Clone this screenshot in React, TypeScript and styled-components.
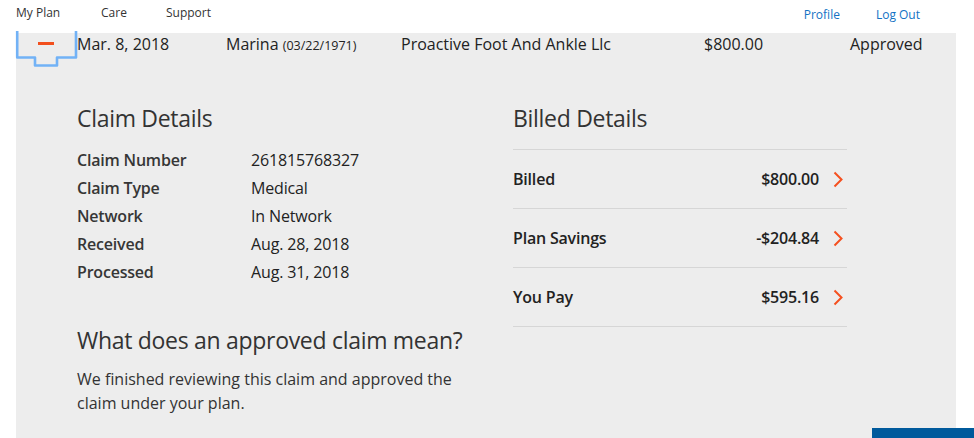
import React from "react";
import styled, { createGlobalStyle } from "styled-components";

const Global = createGlobalStyle`
  html, body { margin: 0; padding: 0; background: #ffffff; }
  body { font-family: "Open Sans", "Liberation Sans", sans-serif; color: #222; overflow: hidden; }
  * { box-sizing: border-box; }
`;

const Page = styled.div`
  width: 974px;
  height: 438px;
  position: relative;
  overflow: hidden;
  background: #fff;
`;

const Header = styled.header`
  height: 33px;
  display: flex;
  align-items: flex-start;
  justify-content: space-between;
  padding: 4px 54px 0 16px;
`;

const NavGroup = styled.nav<{ $gap: number; $top?: number }>`
  display: flex;
  gap: ${(p) => p.$gap}px;
  margin-top: ${(p) => p.$top ?? 0}px;
`;

const NavLink = styled.a<{ $blue?: boolean; $w?: number }>`
  font-size: 12px;
  line-height: 18px;
  color: ${(p) => (p.$blue ? "#1372c4" : "#333")};
  text-decoration: none;
  width: ${(p) => (p.$w ? `${p.$w}px` : "auto")};
`;

const Panel = styled.section`
  margin-left: 16px;
  width: 940px;
  height: 405px;
  background: #ededed;
`;

const ClaimRow = styled.div`
  display: grid;
  grid-template-columns: 61px 149px 175px 303px 146px 1fr;
  align-items: center;
  height: 22px;
  font-size: 16px;
  color: #222;
`;

const ToggleButton = styled.button`
  position: relative;
  height: 22px;
  width: 61px;
  border: none;
  background: transparent;
  padding: 0;
  overflow: visible;
`;

const Minus = styled.span`
  position: absolute;
  left: 22px;
  top: 9px;
  width: 16px;
  height: 2.5px;
  background: #f24f1d;
`;

const FocusRing = styled.svg`
  position: absolute;
  left: 0;
  top: 0;
  overflow: visible;
  pointer-events: none;
`;

const Cell = styled.span`
  white-space: nowrap;
`;

const Dob = styled.span`
  font-size: 12.5px;
`;

const Details = styled.div`
  display: grid;
  grid-template-columns: 436px 334px;
  padding: 48px 0 0 61px;
`;

const Heading = styled.h2`
  margin: 0;
  font-size: 23px;
  font-weight: 400;
  line-height: 30px;
  color: #333;
  letter-spacing: -0.3px;
`;

const InfoList = styled.dl`
  display: grid;
  grid-template-columns: 174px 1fr;
  margin: 13px 0 0;
`;

const Term = styled.dt`
  font-size: 16px;
  font-weight: 600;
  line-height: 28px;
  color: #363636;
  letter-spacing: -0.2px;
`;

const Def = styled.dd`
  margin: 0;
  font-size: 16px;
  line-height: 28px;
  color: #222;
  letter-spacing: -0.15px;
`;

const SubSection = styled.div`
  margin-top: 39px;
`;

const Para = styled.p`
  margin: 12px 0 0;
  font-size: 16px;
  line-height: 24px;
  color: #333;
  width: 400px;
`;

const BillList = styled.ul`
  list-style: none;
  margin: 16px 0 0;
  padding: 0;
  border-top: 1px solid #d6d6d6;
`;

const BillRow = styled.li`
  display: flex;
  align-items: center;
  height: 59px;
  border-bottom: 1px solid #d6d6d6;
  font-size: 16px;
  font-weight: 600;
  color: #222;
  letter-spacing: -0.2px;
`;

const BillLabel = styled.span`
  flex: 1;
`;

const BillAmount = styled.span`
  margin-right: 14px;
`;

const Chevron = styled.svg`
  width: 10px;
  height: 17px;
  margin-right: 4px;
`;

const BottomBar = styled.div`
  position: absolute;
  left: 872px;
  top: 428px;
  width: 102px;
  height: 10px;
  background: #005a9c;
`;

const bills = [
  { label: "Billed", amount: "$800.00" },
  { label: "Plan Savings", amount: "-$204.84" },
  { label: "You Pay", amount: "$595.16" },
];

const info = [
  ["Claim Number", "261815768327"],
  ["Claim Type", "Medical"],
  ["Network", "In Network"],
  ["Received", "Aug. 28, 2018"],
  ["Processed", "Aug. 31, 2018"],
];

export default function App() {
  return (
    <Page>
      <Global />
      <Header>
        <NavGroup $gap={0}>
          <NavLink $w={85}>My Plan</NavLink>
          <NavLink $w={65}>Care</NavLink>
          <NavLink>Support</NavLink>
        </NavGroup>
        <NavGroup $gap={36} $top={2}>
          <NavLink $blue>Profile</NavLink>
          <NavLink $blue>Log Out</NavLink>
        </NavGroup>
      </Header>
      <Panel>
        <ClaimRow>
          <ToggleButton aria-label="Collapse claim">
            <Minus />
            <FocusRing width="61" height="34">
              <path
                d="M1.2,-2 V24.5 H19 V32.5 H41 V24.5 H60 V-2"
                fill="none"
                stroke="#72b2f6"
                strokeWidth="2.6"
                strokeLinejoin="round"
              />
            </FocusRing>
          </ToggleButton>
          <Cell>Mar. 8, 2018</Cell>
          <Cell>
            Marina <Dob>(03/22/1971)</Dob>
          </Cell>
          <Cell>Proactive Foot And Ankle Llc</Cell>
          <Cell>$800.00</Cell>
          <Cell>Approved</Cell>
        </ClaimRow>
        <Details>
          <div>
            <Heading>Claim Details</Heading>
            <InfoList>
              {info.map(([k, v]) => (
                <React.Fragment key={k}>
                  <Term>{k}</Term>
                  <Def>{v}</Def>
                </React.Fragment>
              ))}
            </InfoList>
            <SubSection>
              <Heading>What does an approved claim mean?</Heading>
              <Para>
                We finished reviewing this claim and approved the claim under your plan.
              </Para>
            </SubSection>
          </div>
          <div>
            <Heading>Billed Details</Heading>
            <BillList>
              {bills.map((b) => (
                <BillRow key={b.label}>
                  <BillLabel>{b.label}</BillLabel>
                  <BillAmount>{b.amount}</BillAmount>
                  <Chevron viewBox="0 0 10 17">
                    <path d="M1.5,1.5 L8.5,8.5 L1.5,15.5" fill="none" stroke="#f5501f" strokeWidth="2" />
                  </Chevron>
                </BillRow>
              ))}
            </BillList>
          </div>
        </Details>
      </Panel>
      <BottomBar />
    </Page>
  );
}
